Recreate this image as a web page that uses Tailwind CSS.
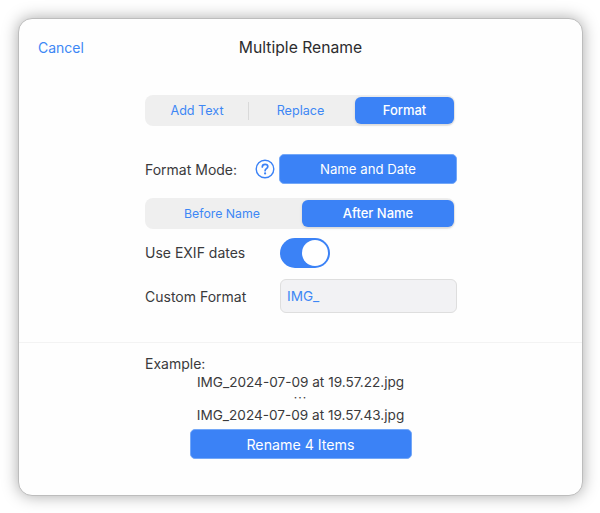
<!doctype html>
<html>
<head>
<meta charset="utf-8">
<script src="https://cdn.jsdelivr.net/npm/@tailwindcss/browser@4"></script>
</head>
<body class="m-0 bg-white">
<div class="w-[600px] h-[513px] pt-[18px] pl-[18px] font-['Inter','Liberation_Sans',sans-serif] overflow-hidden">
  <div class="w-[565px] h-[478px] rounded-[14px] bg-[#fefefe] border border-[#bdbdbd] shadow-[0_0_16px_rgba(0,0,0,0.34)] flex flex-col text-[14px] text-[#3a3a3c]">
    <div class="relative h-[58px] flex items-center justify-center shrink-0">
      <span class="absolute left-[19px] top-[20px] text-[14px] leading-[18px] text-[#3d87f5]">Cancel</span>
      <span class="text-[15.7px] leading-[20px] text-[#2c2c2e]">Multiple Rename</span>
    </div>
    <div class="pl-[126px] shrink-0">
      <div class="mt-[18px] w-[310px] h-[31px] rounded-[8px] bg-[#efefef] flex items-center text-[12.6px] text-[#3d87f5] pl-px">
        <div class="w-[102px] pt-px text-center">Add Text</div>
        <div class="w-px h-[18px] bg-[#d9d9d9]"></div>
        <div class="w-[103px] mr-[3px] pt-px text-center">Replace</div>
        <div class="w-[99px] h-[27px] rounded-[6px] bg-[#3b82f6] text-white text-[13px] font-medium flex items-center justify-center shadow-[0_1px_3px_rgba(0,0,0,0.12)]">Format</div>
      </div>
      <div class="mt-[28px] flex items-center h-[30px]">
        <span class="w-[110px]">Format Mode:</span>
        <svg class="w-[20px] h-[20px] mr-[4px]" viewBox="0 0 20 20" fill="none">
          <circle cx="10" cy="10" r="8.8" stroke="#3b82f6" stroke-width="1.4"/>
          <path d="M7.3 7.9c0-1.6 1.2-2.6 2.8-2.6s2.7 1 2.7 2.3c0 2-2.7 2.1-2.7 4.1" stroke="#3b82f6" stroke-width="1.7" stroke-linecap="round"/>
          <circle cx="10.1" cy="14.4" r="1.1" fill="#3b82f6"/>
        </svg>
        <div class="w-[178px] h-[30px] pt-px rounded-[5px] bg-[#3b82f6] border border-[#74a8f8] text-white text-[13.2px] flex items-center justify-center">Name and Date</div>
      </div>
      <div class="mt-[14px] w-[310px] h-[31px] rounded-[8px] bg-[#efefef] flex items-center text-[12.3px] text-[#3d87f5] pl-px">
        <div class="w-[152px] mr-[4px] pt-px text-center">Before Name</div>
        <div class="w-[152px] h-[27px] rounded-[6px] bg-[#3b82f6] text-white text-[13px] font-medium flex items-center justify-center shadow-[0_1px_3px_rgba(0,0,0,0.12)]">After Name</div>
      </div>
      <div class="mt-[9px] flex items-center h-[30px]">
        <span class="w-[135px] pb-px">Use EXIF dates</span>
        <div class="w-[50px] h-[30px] rounded-full bg-[#3b82f6] flex items-center justify-end pr-[2px]">
          <div class="w-[26px] h-[26px] rounded-full bg-white"></div>
        </div>
      </div>
      <div class="mt-[11px] flex items-center h-[34px]">
        <span class="w-[135px]">Custom Format</span>
        <div class="w-[177px] h-[34px] rounded-[6px] bg-[#f2f2f4] border border-[#dedede] text-[#3d87f5] text-[13.6px] flex items-center pl-[6px]">IMG_</div>
      </div>
    </div>
    <div class="mt-[29px] h-px bg-[#f3f3f3] shrink-0"></div>
    <div class="pl-[126px] pt-[12px]">
      <div class="leading-[18px]">Example:</div>
      <div class="flex flex-col items-center text-[13.6px] w-[311px]">
        <div class="leading-[17px] pt-px h-[17px]">IMG_2024-07-09 at 19.57.22.jpg</div>
        <div class="h-[16px] leading-[16px] text-[12px] tracking-[1px]">···</div>
        <div class="leading-[17px] pt-px h-[17px]">IMG_2024-07-09 at 19.57.43.jpg</div>
        <div class="mt-[6px] w-[222px] h-[30px] pt-px rounded-[5px] bg-[#3b82f6] border border-[#74a8f8] text-white text-[14.2px] flex items-center justify-center">Rename 4 Items</div>
      </div>
    </div>
  </div>
</div>
</body>
</html>
